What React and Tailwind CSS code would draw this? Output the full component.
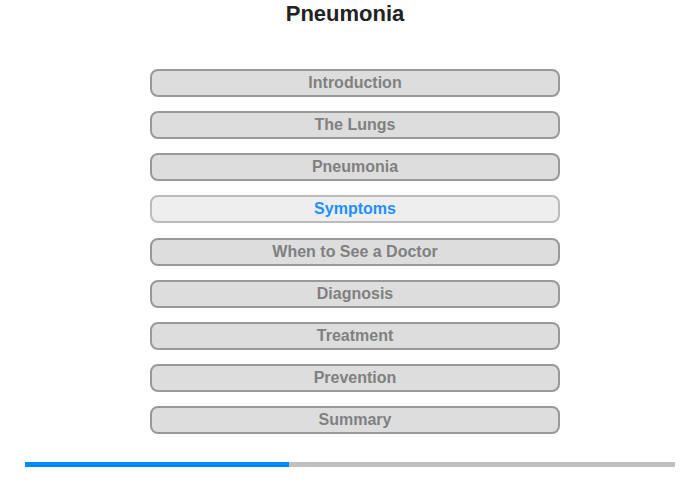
const items = [
  'Introduction',
  'The Lungs',
  'Pneumonia',
  'Symptoms',
  'When to See a Doctor',
  'Diagnosis',
  'Treatment',
  'Prevention',
  'Summary',
];

export default function App() {
  const active = 'Symptoms';
  return (
    <div className="w-[700px] h-[480px] bg-white flex flex-col items-center font-['Liberation_Sans',Arial,sans-serif]">
      <h1 className="mt-[1px] mr-[10px] h-[26px] leading-[26px] text-[22px] font-bold text-[#222]">Pneumonia</h1>
      <div className="mt-[42px] ml-[10px] flex flex-col gap-[14.125px]">
        {items.map((item) => (
          <div
            key={item}
            className={
              item === active
                ? 'w-[410px] h-[28px] rounded-[8px] border-2 border-[#bbbbbb] bg-[#eeeeee] flex items-center justify-center text-[16px] font-bold text-[#1e90ff]'
                : 'w-[410px] h-[28px] rounded-[8px] border-2 border-[#999999] bg-[#dddddd] flex items-center justify-center text-[16px] font-bold text-[#808080]'
            }
          >
            {item}
          </div>
        ))}
      </div>
      <div className="mt-[28px] w-[650px] h-[5px] bg-[#c0c0c0] flex">
        <div className="w-[264px] h-full bg-[#0088ff]" />
      </div>
    </div>
  );
}
